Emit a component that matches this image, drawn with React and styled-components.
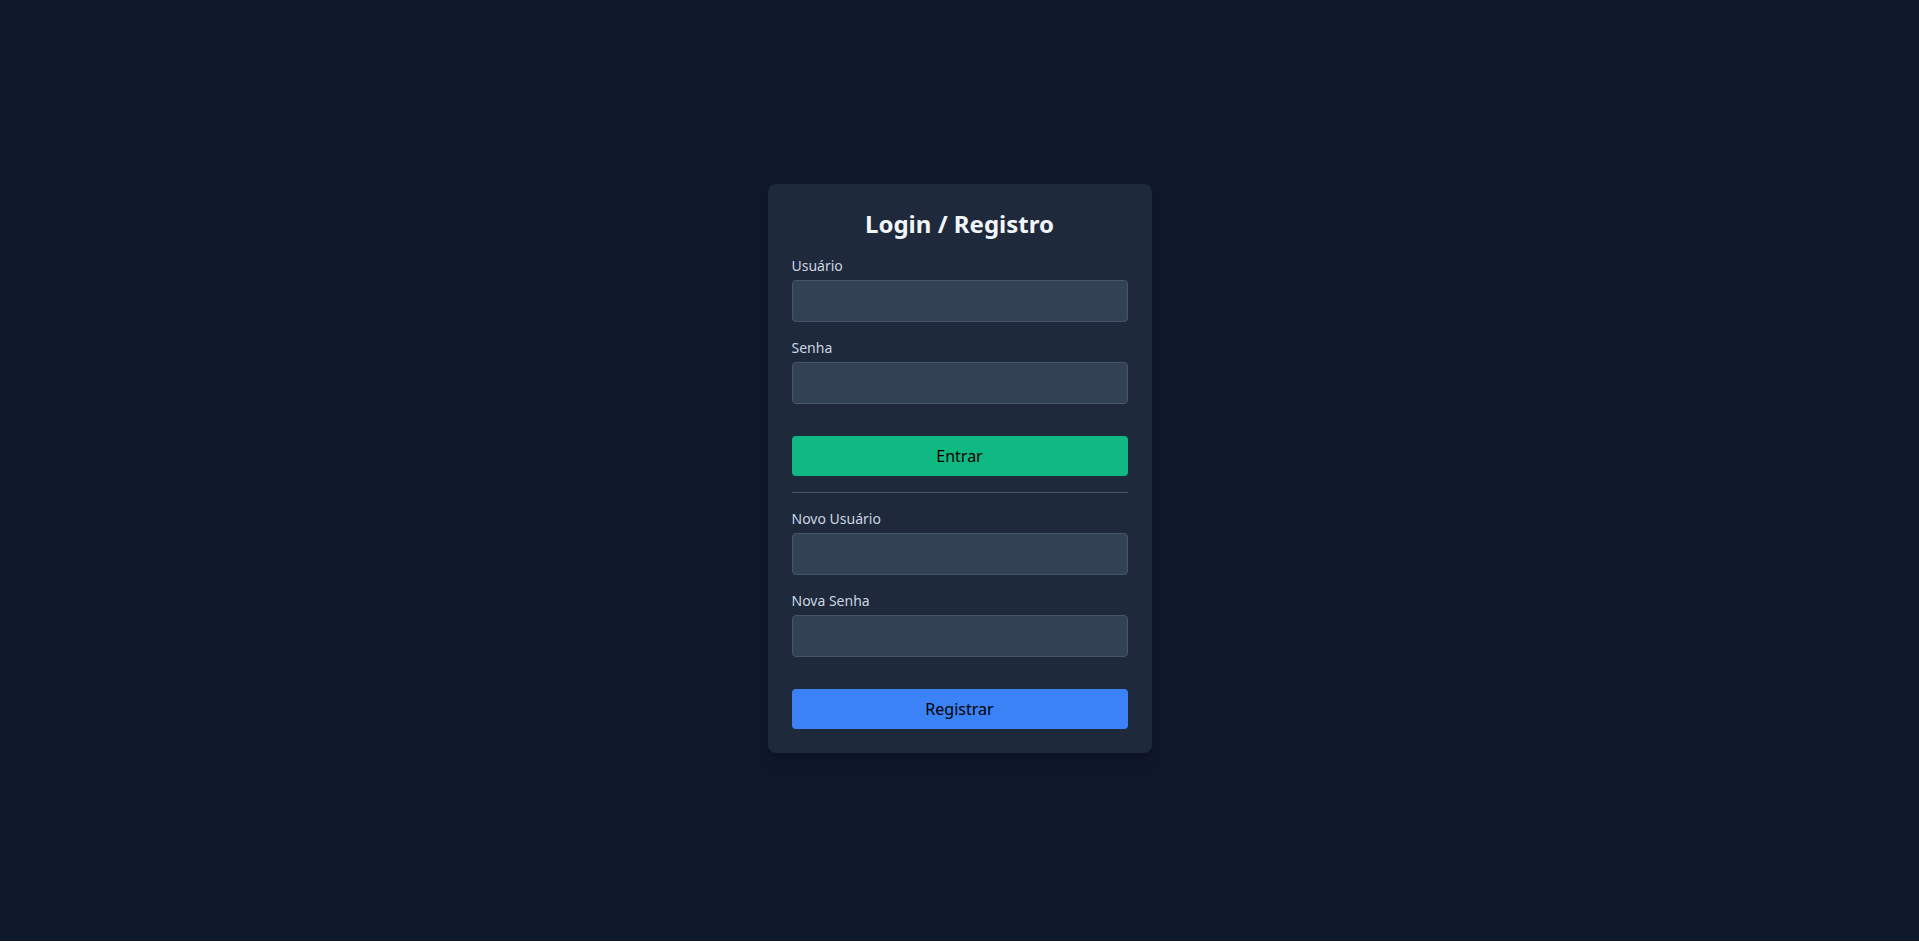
import React from "react";
import styled, { createGlobalStyle } from "styled-components";

const GlobalStyle = createGlobalStyle`
  html, body {
    margin: 0;
    padding: 0;
    background: #ffffff;
  }
  body {
    font-family: "Noto Sans", "Open Sans", sans-serif;
  }
  *, *::before, *::after { box-sizing: border-box; }
`;

const Screen = styled.div`
  height: 941px;
  background: #0f172a;
  display: flex;
  align-items: center;
  justify-content: center;
  padding-bottom: 4px;
`;

const Card = styled.div`
  width: 384px;
  background: #1e293b;
  border-radius: 8px;
  padding: 24px;
  box-shadow: 0 10px 15px -3px rgba(0, 0, 0, 0.1), 0 4px 6px -4px rgba(0, 0, 0, 0.1);
`;

const Title = styled.h2`
  margin: 0 0 16px;
  font-size: 24px;
  line-height: 32px;
  font-weight: 700;
  text-align: center;
  color: #f1f5f9;
`;

const Field = styled.div`
  margin-bottom: 16px;
`;

const Label = styled.label`
  display: block;
  font-size: 14px;
  line-height: 20px;
  color: #cbd5e1;
  margin-bottom: 4px;
`;

const Input = styled.input`
  display: block;
  width: 100%;
  height: 42px;
  padding: 8px 12px;
  background: #334155;
  border: 1px solid #475569;
  border-radius: 4px;
  color: #f1f5f9;
  font: inherit;
  font-size: 16px;
  outline: none;
`;

const Button = styled.button`
  display: block;
  width: 100%;
  height: 40px;
  margin-top: 32px;
  border: none;
  border-radius: 4px;
  background: ${(p) => p.$bg};
  color: #000000;
  font-family: inherit;
  font-size: 16px;
  line-height: 24px;
  cursor: pointer;
`;

const Divider = styled.hr`
  margin: 16px 0;
  border: none;
  border-top: 1px solid #475569;
`;

const Form = styled.div`
  & > ${Field}:last-of-type {
    margin-bottom: 0;
  }
`;

export default function App() {
  return (
    <>
      <GlobalStyle />
      <Screen>
        <Card>
          <Title>Login / Registro</Title>
          <Form>
            <Field>
              <Label>Usuário</Label>
              <Input type="text" />
            </Field>
            <Field>
              <Label>Senha</Label>
              <Input type="password" />
            </Field>
          </Form>
          <Button $bg="#10b981">Entrar</Button>
          <Divider />
          <Form>
            <Field>
              <Label>Novo Usuário</Label>
              <Input type="text" />
            </Field>
            <Field>
              <Label>Nova Senha</Label>
              <Input type="password" />
            </Field>
          </Form>
          <Button $bg="#3b82f6">Registrar</Button>
        </Card>
      </Screen>
    </>
  );
}
